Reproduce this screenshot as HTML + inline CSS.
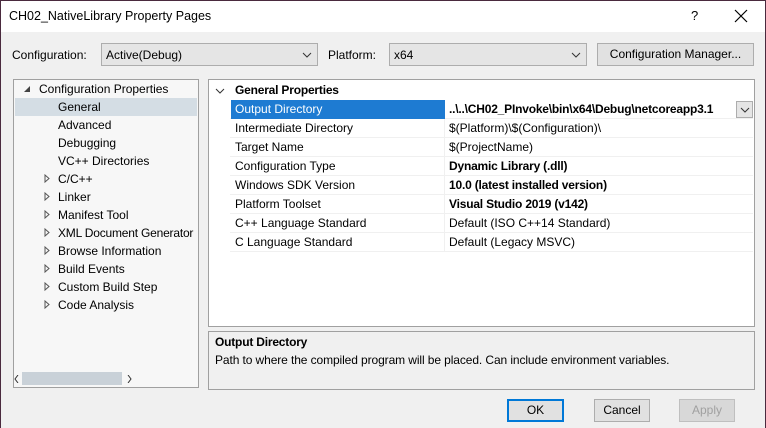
<!DOCTYPE html>
<html><head><style>
*{margin:0;padding:0;box-sizing:border-box}
body{width:766px;height:428px;background:#f0f0f0;font-family:"Liberation Sans",sans-serif;font-size:12px;color:#000;position:relative;overflow:hidden;border:1px solid #4a2a3e;border-bottom:none}
.a{position:absolute;white-space:nowrap}
.title{left:0;top:0;width:764px;height:31px;background:#fff}
.combo{background:#e5e5e5;border:1px solid #adadad;height:23px}
.btn{background:#e1e1e1;border:1px solid #adadad;height:23px;text-align:center;line-height:21px}
.row{position:absolute;left:229px;width:523px;height:19px;border-bottom:1px solid #f0f0f0}
.row span{position:absolute;top:2px}
.row .k{left:5px}.row .v{left:219px}
.row .sep{position:absolute;left:214px;top:0;width:1px;height:19px;background:#f0f0f0}
b{font-weight:bold;letter-spacing:-0.2px}
.chev{position:absolute}
</style></head><body>
<div class="a title"></div>
<div class="a" style="left:8px;top:8px;font-size:12.5px">CH02_NativeLibrary Property Pages</div>
<div class="a" style="left:690px;top:7px;font-size:13px">?</div>
<svg class="a" style="left:733px;top:8px" width="14" height="14"><path d="M1 1L13 13M13 1L1 13" stroke="#000" stroke-width="1.2"/></svg>

<div class="a" style="left:11px;top:47px">Configuration:</div>
<div class="a combo" style="left:100px;top:42px;width:217px"><span class="a" style="left:4px;top:4px">Active(Debug)</span><svg class="chev" style="right:5px;top:8px" width="10" height="6"><path d="M1 1L5 5L9 1" stroke="#333" fill="none"/></svg></div>
<div class="a" style="left:327px;top:47px">Platform:</div>
<div class="a combo" style="left:388px;top:42px;width:198px"><span class="a" style="left:4px;top:4px">x64</span><svg class="chev" style="right:5px;top:8px" width="10" height="6"><path d="M1 1L5 5L9 1" stroke="#333" fill="none"/></svg></div>
<div class="a btn" style="left:596px;top:42px;width:157px">Configuration Manager...</div>

<div class="a" style="left:12px;top:78px;width:186px;height:309px;background:#f7f7f7;border:1px solid #a0a0a0"></div>
<div class="a" style="left:14px;top:97px;width:182px;height:18px;background:#d4dde4"></div>
<svg class="a" style="left:23px;top:85px" width="7" height="7"><path d="M6 0L6 6L0 6Z" fill="#444"/></svg>
<div class="a" style="left:38px;top:81px">Configuration Properties</div>
<div class="a" style="left:57px;top:99px">General</div>
<div class="a" style="left:57px;top:117px">Advanced</div>
<div class="a" style="left:57px;top:135px">Debugging</div>
<div class="a" style="left:57px;top:153px">VC++ Directories</div>
<div class="a" style="left:57px;top:171px">C/C++</div>
<div class="a" style="left:57px;top:189px">Linker</div>
<div class="a" style="left:57px;top:207px">Manifest Tool</div>
<div class="a" style="left:57px;top:225px;letter-spacing:-0.2px">XML Document Generator</div>
<div class="a" style="left:57px;top:243px">Browse Information</div>
<div class="a" style="left:57px;top:261px">Build Events</div>
<div class="a" style="left:57px;top:279px">Custom Build Step</div>
<div class="a" style="left:57px;top:297px">Code Analysis</div>
<svg class="a" style="left:43px;top:173px" width="8" height="136">
<g fill="none" stroke="#555"><path d="M1 1L5 4.5L1 8Z"/><path d="M1 19L5 22.5L1 26Z"/><path d="M1 37L5 40.5L1 44Z"/><path d="M1 55L5 58.5L1 62Z"/><path d="M1 73L5 76.5L1 80Z"/><path d="M1 91L5 94.5L1 98Z"/><path d="M1 109L5 112.5L1 116Z"/><path d="M1 127L5 130.5L1 134Z"/></g></svg>
<div class="a" style="left:21px;top:371px;width:100px;height:13px;background:#c9d1d8"></div>
<svg class="a" style="left:13px;top:374px" width="5" height="8"><path d="M4 0L1 4L4 8" stroke="#333" fill="none"/></svg>
<svg class="a" style="left:126px;top:374px" width="5" height="8"><path d="M1 0L4 4L1 8" stroke="#333" fill="none"/></svg>

<div class="a" style="left:207px;top:78px;width:547px;height:248px;background:#fff;border:1px solid #a0a0a0"></div>
<svg class="a" style="left:214px;top:87px" width="10" height="6"><path d="M1 1L5 5L9 1" stroke="#333" fill="none"/></svg>
<div class="a" style="left:234px;top:82px"><b>General Properties</b></div>
<div class="row" style="top:99px"><div class="a" style="left:1px;top:0;width:214px;height:19px;background:#1e7bd2"></div><span class="k" style="color:#fff">Output Directory</span><span class="v"><b>..\..\CH02_PInvoke\bin\x64\Debug\netcoreapp3.1</b></span><div class="a combo" style="left:506px;top:1px;width:17px;height:17px"><svg class="chev" style="left:3px;top:5px" width="10" height="6"><path d="M1 1L5 5L9 1" stroke="#333" fill="none"/></svg></div></div>
<div class="row" style="top:118px"><div class="sep"></div><span class="k">Intermediate Directory</span><span class="v">$(Platform)\$(Configuration)\</span></div>
<div class="row" style="top:137px"><div class="sep"></div><span class="k">Target Name</span><span class="v">$(ProjectName)</span></div>
<div class="row" style="top:156px"><div class="sep"></div><span class="k">Configuration Type</span><span class="v"><b>Dynamic Library (.dll)</b></span></div>
<div class="row" style="top:175px"><div class="sep"></div><span class="k">Windows SDK Version</span><span class="v"><b>10.0 (latest installed version)</b></span></div>
<div class="row" style="top:194px"><div class="sep"></div><span class="k">Platform Toolset</span><span class="v"><b>Visual Studio 2019 (v142)</b></span></div>
<div class="row" style="top:213px"><div class="sep"></div><span class="k">C++ Language Standard</span><span class="v">Default (ISO C++14 Standard)</span></div>
<div class="row" style="top:232px"><div class="sep"></div><span class="k">C Language Standard</span><span class="v">Default (Legacy MSVC)</span></div>

<div class="a" style="left:207px;top:330px;width:547px;height:59px;border:1px solid #a0a0a0"></div>
<div class="a" style="left:214px;top:334px"><b>Output Directory</b></div>
<div class="a" style="left:214px;top:352px;letter-spacing:-0.1px">Path to where the compiled program will be placed. Can include environment variables.</div>

<div class="a btn" style="left:506px;top:398px;width:57px;border:2px solid #0078d7;line-height:19px">OK</div>
<div class="a btn" style="left:593px;top:398px;width:56px">Cancel</div>
<div class="a btn" style="left:678px;top:398px;width:56px;color:#a0a0a0;background:#d8d8d8;border-color:#bfbfbf">Apply</div>
</body></html>
